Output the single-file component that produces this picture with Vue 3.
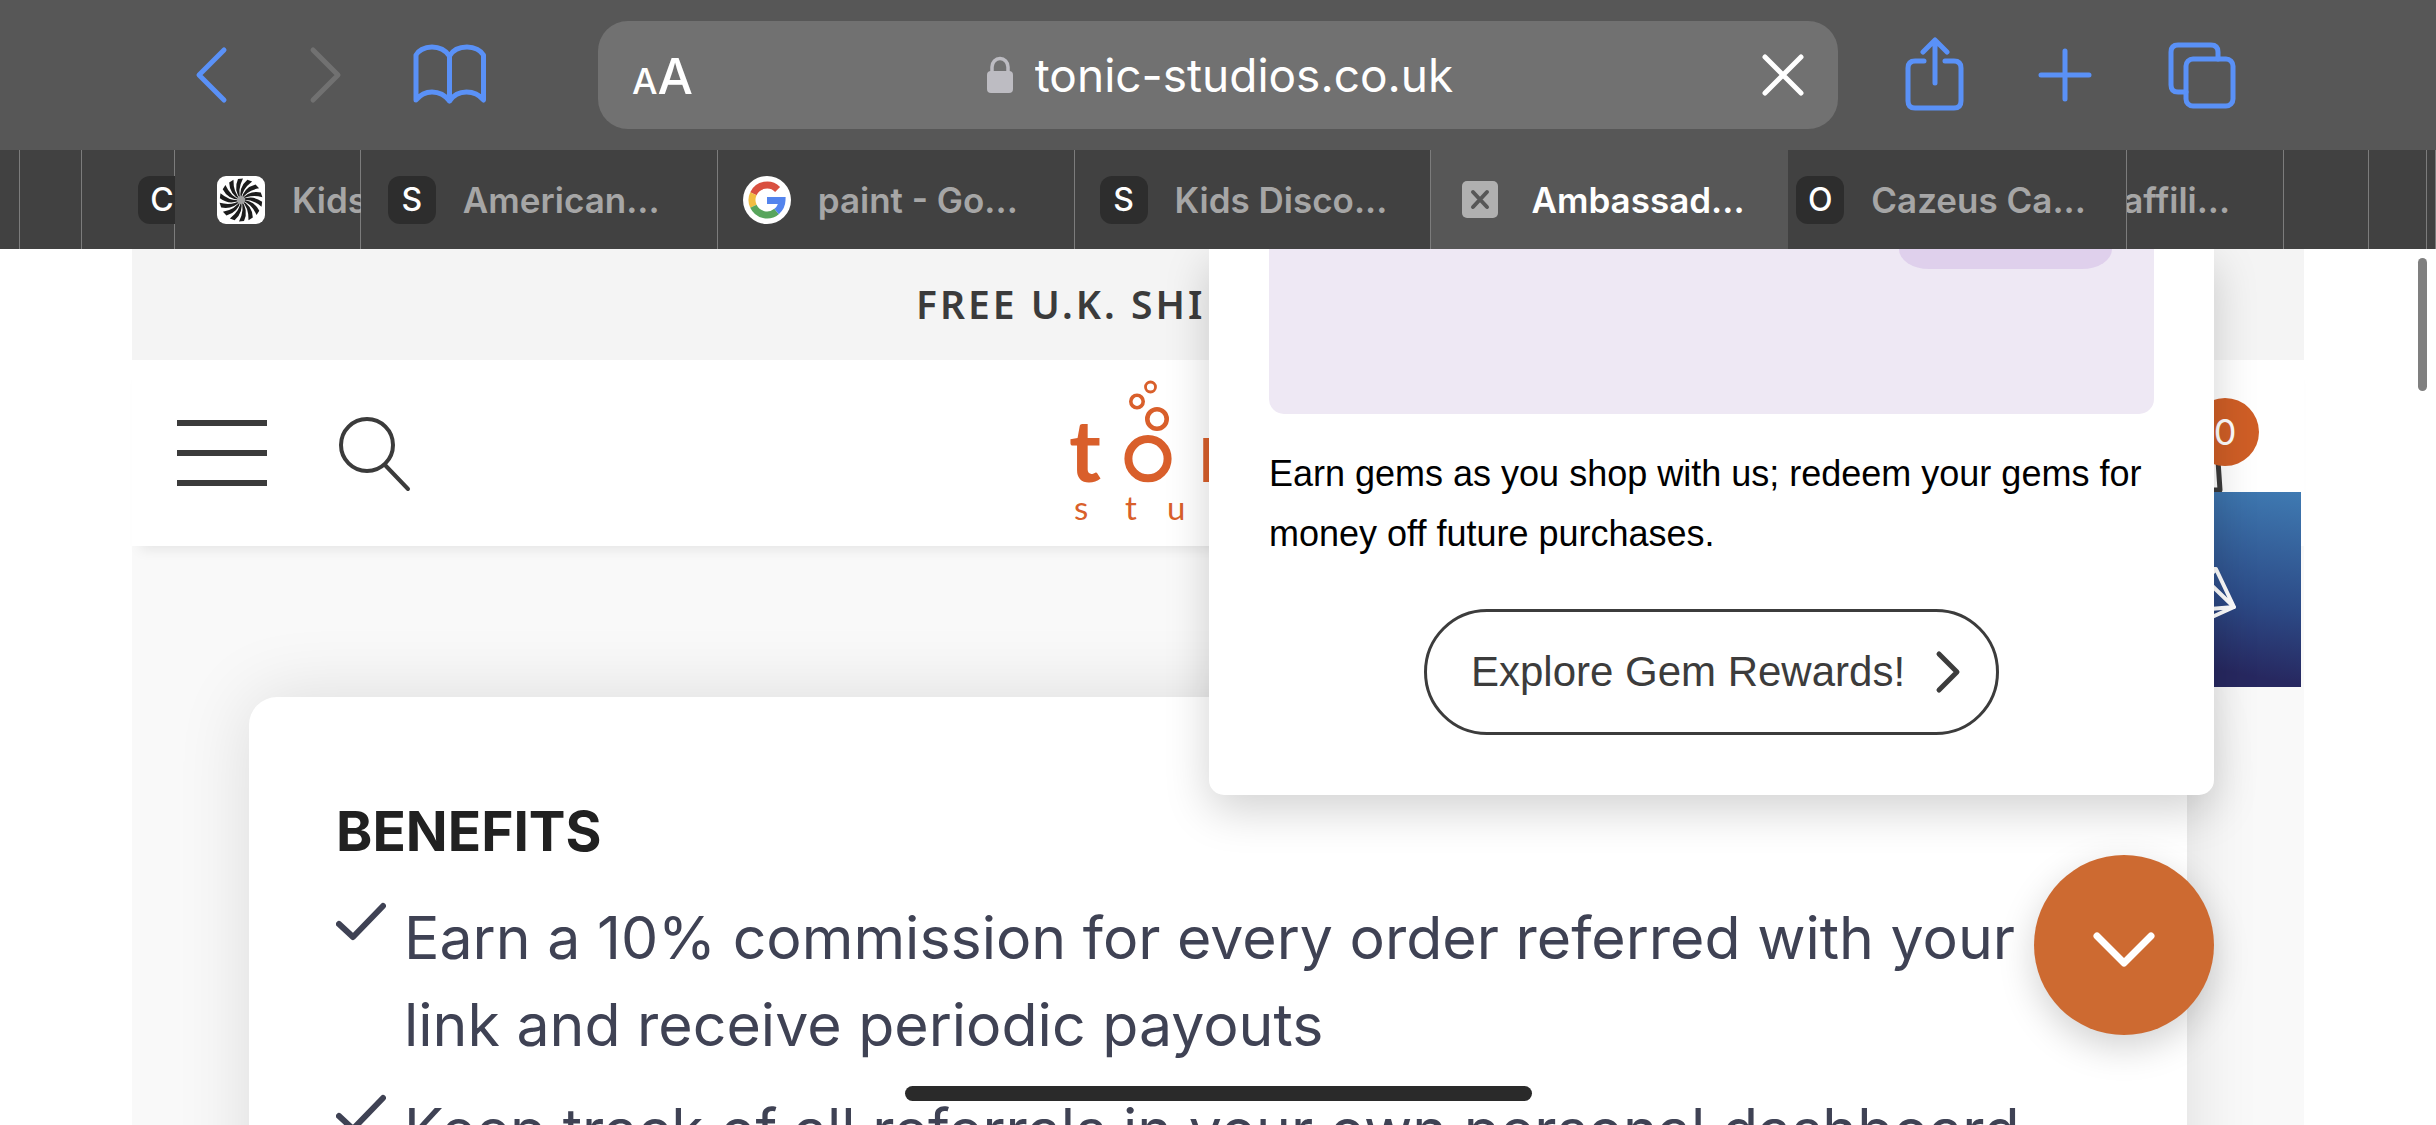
<script setup>
import { ref } from 'vue'

const address = ref('tonic-studios.co.uk')

// span = share of the strip, inset = space before the icon
const tabs = [
  { span: 20, inset: 0 },
  { span: 62, inset: 0 },
  { span: 93, inset: 56, letter: 'C' },
  { span: 186, inset: 42, icon: 'swirl', title: 'Kids' },
  { span: 357, inset: 27, letter: 'S', title: 'American...' },
  { span: 357, inset: 25, icon: 'google', title: 'paint - Go...' },
  { span: 357, inset: 25, letter: 'S', title: 'Kids Disco...' },
  { span: 357, inset: 31, icon: 'close', title: 'Ambassad...', active: true },
  { span: 339, inset: 8, letter: 'O', title: 'Cazeus Ca...' },
  { span: 157, inset: -4, title: 'affili...' },
  { span: 85, inset: 0 },
  { span: 58, inset: 0 },
  { span: 9, inset: 0 },
]

const benefits = [
  'Earn a 10% commission for every order referred with your link and receive periodic payouts',
  'Keep track of all referrals in your own personal dashboard',
]
</script>

<template>
  <div class="screen">
    <header class="toolbar">
      <nav class="group">
        <button class="tool" aria-label="Back">
          <svg width="50" height="60" viewBox="0 0 50 60"><path d="M32 5 7 30l25 25" /></svg>
        </button>
        <button class="tool dim" aria-label="Forward" disabled>
          <svg width="40" height="60" viewBox="0 0 40 60"><path d="m7 5 25 25L7 55" /></svg>
        </button>
        <button class="tool" aria-label="Bookmarks">
          <svg width="80" height="64" viewBox="0 0 80 64">
            <path d="M39.500 58V13C34 5 27 4 22 4 14 4 8 8 6 12v45c4-5 9-8 16-8s13 3 17.500 9c4-6 10-9 17-9s13 3 17 8V12C71 8 65 4 57 4c-6 0-13 1-17.500 9" />
          </svg>
        </button>
      </nav>

      <div class="address-bar">
        <button class="text-size" aria-label="Page settings"><small>A</small>A</button>
        <label class="address">
          <svg width="26" height="38" viewBox="0 0 26 38" aria-label="Secure">
            <path d="M5 17V11a8 8.500 0 0 1 16 0v6" fill="none" stroke="#bdbcc2" stroke-width="3.500" />
            <rect y="15" width="26" height="22" rx="4" fill="#bdbcc2" />
          </svg>
          <input v-model="address" type="text" aria-label="Address" />
        </label>
        <button class="stop" aria-label="Stop loading">
          <svg width="42" height="44" viewBox="0 0 42 44"><path d="m3 4 36 36M39 4 3 40" /></svg>
        </button>
      </div>

      <nav class="group actions">
        <button class="tool" aria-label="Share">
          <svg width="62" height="76" viewBox="0 0 62 76">
            <path d="M20 24H11q-7 0-7 7v33q0 7 7 7h39q7 0 7-7V31q0-7-7-7H41" />
            <path d="M31 46V4M19 15 31 3l12 12" />
          </svg>
        </button>
        <button class="tool" aria-label="New tab">
          <svg width="58" height="60" viewBox="0 0 58 60"><path d="M29 6v48M5 30h48" /></svg>
        </button>
        <button class="tool" aria-label="Show tabs">
          <svg width="74" height="72" viewBox="0 0 74 72">
            <rect x="22" y="20" width="47" height="47" rx="7" />
            <path d="M22 53h-8q-7 0-7-7V13q0-7 7-7h33q7 0 7 7v7" />
          </svg>
        </button>
      </nav>
    </header>

    <nav class="tabs">
      <a
        v-for="(tab, i) in tabs"
        :key="i"
        href="#"
        class="tab"
        :class="{ active: tab.active }"
        :style="{ flexGrow: tab.span }"
      >
        <span class="tab-body" :style="{ marginLeft: tab.inset + 'px' }">
          <span v-if="tab.letter" class="tile">{{ tab.letter }}</span>
          <svg v-if="tab.icon === 'swirl'" width="48" height="48" viewBox="0 0 48 48">
            <rect width="48" height="48" rx="9" fill="#fff" />
            <path
              v-for="n in 14"
              :key="n"
              d="M24 24Q16 14 21 3L26 2.500Q20 14 24 24Z"
              fill="#1c1c1c"
              :transform="`rotate(${(n * 360) / 14} 24 24)`"
            />
            <circle cx="24" cy="24" r="4" fill="#a0a0a0" />
          </svg>
          <svg v-if="tab.icon === 'google'" width="48" height="48" viewBox="0 0 48 48">
            <circle cx="24" cy="24" r="24" fill="#fff" />
            <g fill="none" stroke-width="7">
              <path d="M34.600 13.400A15 15 0 0 0 10.400 17.700" stroke="#d95040" />
              <path d="M10.400 17.700a15 15 0 0 0 0 12.600" stroke="#f2bd42" />
              <path d="M10.400 30.300a15 15 0 0 0 23.200 5.200" stroke="#58a55c" />
              <path d="M33.600 35.500A15 15 0 0 0 39 24.500H24" stroke="#5384ed" />
            </g>
          </svg>
          <svg v-if="tab.icon === 'close'" width="36" height="38" viewBox="0 0 36 38">
            <rect width="36" height="37" rx="5" fill="#b0b0b0" />
            <path d="m11 11 14 15m0-15L11 26" stroke="#575757" stroke-width="4" stroke-linecap="round" />
          </svg>
          <span v-if="tab.title" class="title" :class="{ spaced: tab.active }">{{ tab.title }}</span>
        </span>
      </a>
    </nav>

    <div class="viewport">
      <div class="page">
        <p class="announcement">FREE U.K. SHI</p>

        <header class="site-header">
          <button class="burger" aria-label="Menu"><i></i><i></i><i></i></button>
          <button class="search" aria-label="Search">
            <svg width="76" height="80" viewBox="0 0 76 80" fill="none" stroke="#3b3b3b" stroke-width="4" stroke-linecap="round">
              <circle cx="30" cy="32" r="26" />
              <path d="m48 52 23 24" />
            </svg>
          </button>
          <a href="#" class="logo" aria-label="Tonic Studios">
            <svg width="150" height="160" viewBox="0 0 150 160">
              <g fill="none" stroke="#d95f2b">
                <circle cx="80.500" cy="14" r="5" stroke-width="2.800" />
                <circle cx="67" cy="28.500" r="6.200" stroke-width="3.600" />
                <circle cx="87" cy="46" r="9.700" stroke-width="4.600" />
                <circle cx="78" cy="85.700" r="19.600" stroke-width="8" />
              </g>
              <g class="big">
                <text x="-1" y="109">t</text>
                <text x="128" y="109">n</text>
              </g>
              <g class="small">
                <text x="4" y="147">s</text>
                <text x="55" y="147">t</text>
                <text x="97" y="147">u</text>
              </g>
            </svg>
          </a>
          <button class="bag" aria-label="Basket">
            <svg width="60" height="66" viewBox="0 0 60 66" fill="none" stroke="#3b3b3b" stroke-width="5" stroke-linejoin="round">
              <path d="M7 18h47l3 44H4z" />
            </svg>
            <span class="count">0</span>
          </button>
        </header>

        <main class="content">
          <section class="card">
            <h2>BENEFITS</h2>
            <ul>
              <li v-for="item in benefits" :key="item">
                <svg width="50" height="40" viewBox="0 0 50 40"><path d="m3 22 14 13L47 4" /></svg>
                <span>{{ item }}</span>
              </li>
            </ul>
          </section>
        </main>
      </div>

      <a href="#" class="gems" aria-label="Gem rewards">
        <svg width="70" height="84" viewBox="3 0 70 84" fill="none" stroke="#fff" stroke-width="4" stroke-linejoin="round">
          <path d="M22 21h28l18 38-33 15L2 59zM22 21 40 32l28 27-48 4zM2 59l18 4 15 11M50 21l-10 11" />
        </svg>
      </a>

      <aside class="popup">
        <div class="banner"><span class="pill"></span></div>
        <p>Earn gems as you shop with us; redeem your gems for money off future purchases.</p>
        <button class="explore">
          Explore Gem Rewards!
          <svg width="26" height="44" viewBox="0 0 26 44"><path d="m4 4 18 18L4 40" /></svg>
        </button>
      </aside>

      <button class="chat" aria-label="Close rewards">
        <svg width="66" height="40" viewBox="0 0 66 40"><path d="m6 6 27 27L60 6" /></svg>
      </button>

      <span class="scrollbar"></span>
      <span class="home-indicator"></span>
    </div>
  </div>
</template>

<style>
body {
  margin: 0;
  overflow: hidden;
}
</style>

<style scoped>
.screen {
  display: flex;
  flex-direction: column;
  height: 100vh;
  overflow: hidden;
  background: #fff;
  font-family: Inter, sans-serif;
}

button {
  padding: 0;
  border: none;
  background: none;
  font-family: inherit;
  color: inherit;
}

a {
  color: inherit;
  text-decoration: none;
}

svg {
  display: block;
  flex: none;
}

.toolbar {
  display: flex;
  align-items: center;
  box-sizing: border-box;
  flex: none;
  height: 150px;
  padding: 0 198px 0 192px;
  background: #575757;
}

.group {
  display: flex;
  align-items: center;
  gap: 64px;
}

.actions {
  gap: 70px;
}

.tool svg {
  fill: none;
  stroke: #5a91f7;
  stroke-width: 5;
  stroke-linecap: round;
  stroke-linejoin: round;
}

.tool.dim svg {
  stroke: #717171;
}

.address-bar {
  display: grid;
  grid-template-columns: 1fr auto 1fr;
  align-items: center;
  box-sizing: border-box;
  flex: 1;
  height: 108px;
  margin: 0 66px 0 108px;
  padding: 0 34px;
  border-radius: 30px;
  background: #717171;
  color: #fff;
}

.text-size {
  justify-self: start;
  padding-top: 6px;
  font-size: 50px;
  font-weight: 500;
  line-height: 56px;
}

.text-size small {
  font-size: 36px;
}

.address {
  display: flex;
  align-items: center;
  gap: 22px;
  padding-left: 4px;
}

.address input {
  field-sizing: content;
  padding: 0;
  border: none;
  outline: none;
  background: none;
  color: #fff;
  font-family: Inter, sans-serif;
  font-size: 46px;
  line-height: 56px;
}

.stop {
  justify-self: end;
}

.stop svg {
  fill: none;
  stroke: #fff;
  stroke-width: 5;
  stroke-linecap: round;
}

.tabs {
  display: flex;
  flex: none;
  height: 99px;
  background: #414141;
}

.tab {
  flex: 1 1 0;
  min-width: 0;
  overflow: hidden;
  box-shadow: inset -1px 0 #7c7c7c;
  color: #a6a6a6;
}

.tab.active {
  background: #575757;
  box-shadow: none;
  color: #fff;
}

.tab-body {
  display: flex;
  align-items: center;
  gap: 27px;
  height: 100%;
}

.tile {
  flex: none;
  width: 48px;
  border-radius: 12px;
  background: #2d2d2d;
  color: #fff;
  font-size: 32px;
  font-weight: 500;
  line-height: 48px;
  text-align: center;
}

.title {
  font-size: 35px;
  font-weight: 600;
  white-space: nowrap;
}

.title.spaced {
  margin-left: 6px;
}

.viewport {
  position: relative;
  flex: 1;
  min-height: 0;
  overflow: hidden;
}

.page {
  margin: 0 132px;
  background: #f9f9f9;
}

.announcement {
  margin: 0;
  padding: 0 0 2px 784px;
  background: #f4f4f4;
  color: #3b3b3b;
  font-family: "Noto Sans", sans-serif;
  font-size: 39px;
  font-weight: 600;
  letter-spacing: 3px;
  line-height: 109px;
}

.site-header {
  position: relative;
  display: flex;
  align-items: center;
  height: 186px;
  padding: 0 45px;
  background: #fff;
  box-shadow: 0 12px 12px -8px rgba(0, 0, 0, 0.08);
}

.burger {
  display: flex;
  flex-direction: column;
  gap: 24px;
  width: 90px;
}

.burger i {
  height: 6px;
  background: #3b3b3b;
}

.search {
  margin-left: 70px;
}

.logo {
  margin-left: 657px;
}

.logo text {
  fill: #d95f2b;
  font-family: Lato, sans-serif;
}

.logo .big {
  font-size: 86px;
  font-weight: 700;
}

.logo .small {
  font-size: 33px;
}

.bag {
  position: relative;
  margin: 15px 36px 0 auto;
}

.count {
  position: absolute;
  right: -36px;
  bottom: 28px;
  width: 68px;
  border-radius: 50%;
  background: #cf5e26;
  color: #fff;
  font-size: 36px;
  line-height: 68px;
}

.content {
  padding: 151px 117px 0;
}

.card {
  min-height: 500px;
  padding: 87px 87px 0;
  border-radius: 28px;
  background: #fff;
  box-shadow: 0 0 75px rgba(0, 0, 0, 0.12);
}

.card h2 {
  margin: 0;
  color: #212121;
  font-size: 55px;
  font-weight: 700;
  line-height: 94px;
}

.card ul {
  margin: 0;
  padding: 16px 0 0;
  list-style: none;
}

.card li {
  display: flex;
  gap: 18px;
  margin-bottom: 18px;
  color: #3f4254;
  font-size: 59px;
  line-height: 87px;
}

.card li svg {
  margin-top: 8px;
  fill: none;
  stroke: #3f4254;
  stroke-width: 6;
  stroke-linecap: round;
  stroke-linejoin: round;
}

.gems {
  position: absolute;
  top: 243px;
  right: 135px;
  display: flex;
  align-items: center;
  justify-content: center;
  width: 195px;
  height: 195px;
  background: linear-gradient(190deg, #3f7ab2, #2c4a86 52%, #272860 84%);
}

.popup {
  position: absolute;
  top: 0;
  right: 222px;
  box-sizing: border-box;
  width: 1005px;
  padding: 0 60px 60px;
  border-radius: 0 0 15px 15px;
  background: #fff;
  box-shadow: 0 15px 45px rgba(0, 0, 0, 0.18);
  color: #000;
  font-family: "Liberation Sans", sans-serif;
}

.banner {
  display: flex;
  justify-content: flex-end;
  align-items: flex-start;
  height: 165px;
  padding-right: 42px;
  border-radius: 0 0 15px 15px;
  background: #eee8f4;
}

.pill {
  width: 213px;
  height: 20px;
  border-radius: 0 0 30px 30px / 0 0 20px 20px;
  background: #dfd0ec;
}

.popup p {
  margin: 30px 0 45px;
  font-size: 36px;
  line-height: 60px;
}

.explore {
  display: flex;
  align-items: center;
  gap: 30px;
  box-sizing: border-box;
  height: 126px;
  margin: 0 auto;
  padding: 0 35px 0 44px;
  border: 3px solid #3c3c3c;
  border-radius: 63px;
  color: #3c3c3c;
  font-size: 42px;
}

.explore svg {
  fill: none;
  stroke: #3c3c3c;
  stroke-width: 5;
  stroke-linecap: round;
  stroke-linejoin: round;
}

.chat {
  position: absolute;
  top: 606px;
  right: 222px;
  display: flex;
  align-items: center;
  justify-content: center;
  width: 180px;
  height: 180px;
  padding-top: 9px;
  border-radius: 50%;
  background: #cd6a31;
  box-shadow: 0 12px 36px rgba(0, 0, 0, 0.18);
}

.chat svg {
  fill: none;
  stroke: #fff;
  stroke-width: 7;
  stroke-linecap: round;
  stroke-linejoin: round;
}

.scrollbar {
  position: absolute;
  top: 9px;
  right: 9px;
  width: 9px;
  height: 133px;
  border-radius: 5px;
  background: #7f7f7f;
}

.home-indicator {
  position: absolute;
  bottom: 24px;
  left: 50%;
  width: 627px;
  height: 15px;
  margin-left: -313px;
  border-radius: 8px;
  background: #2a2a2a;
}
</style>
